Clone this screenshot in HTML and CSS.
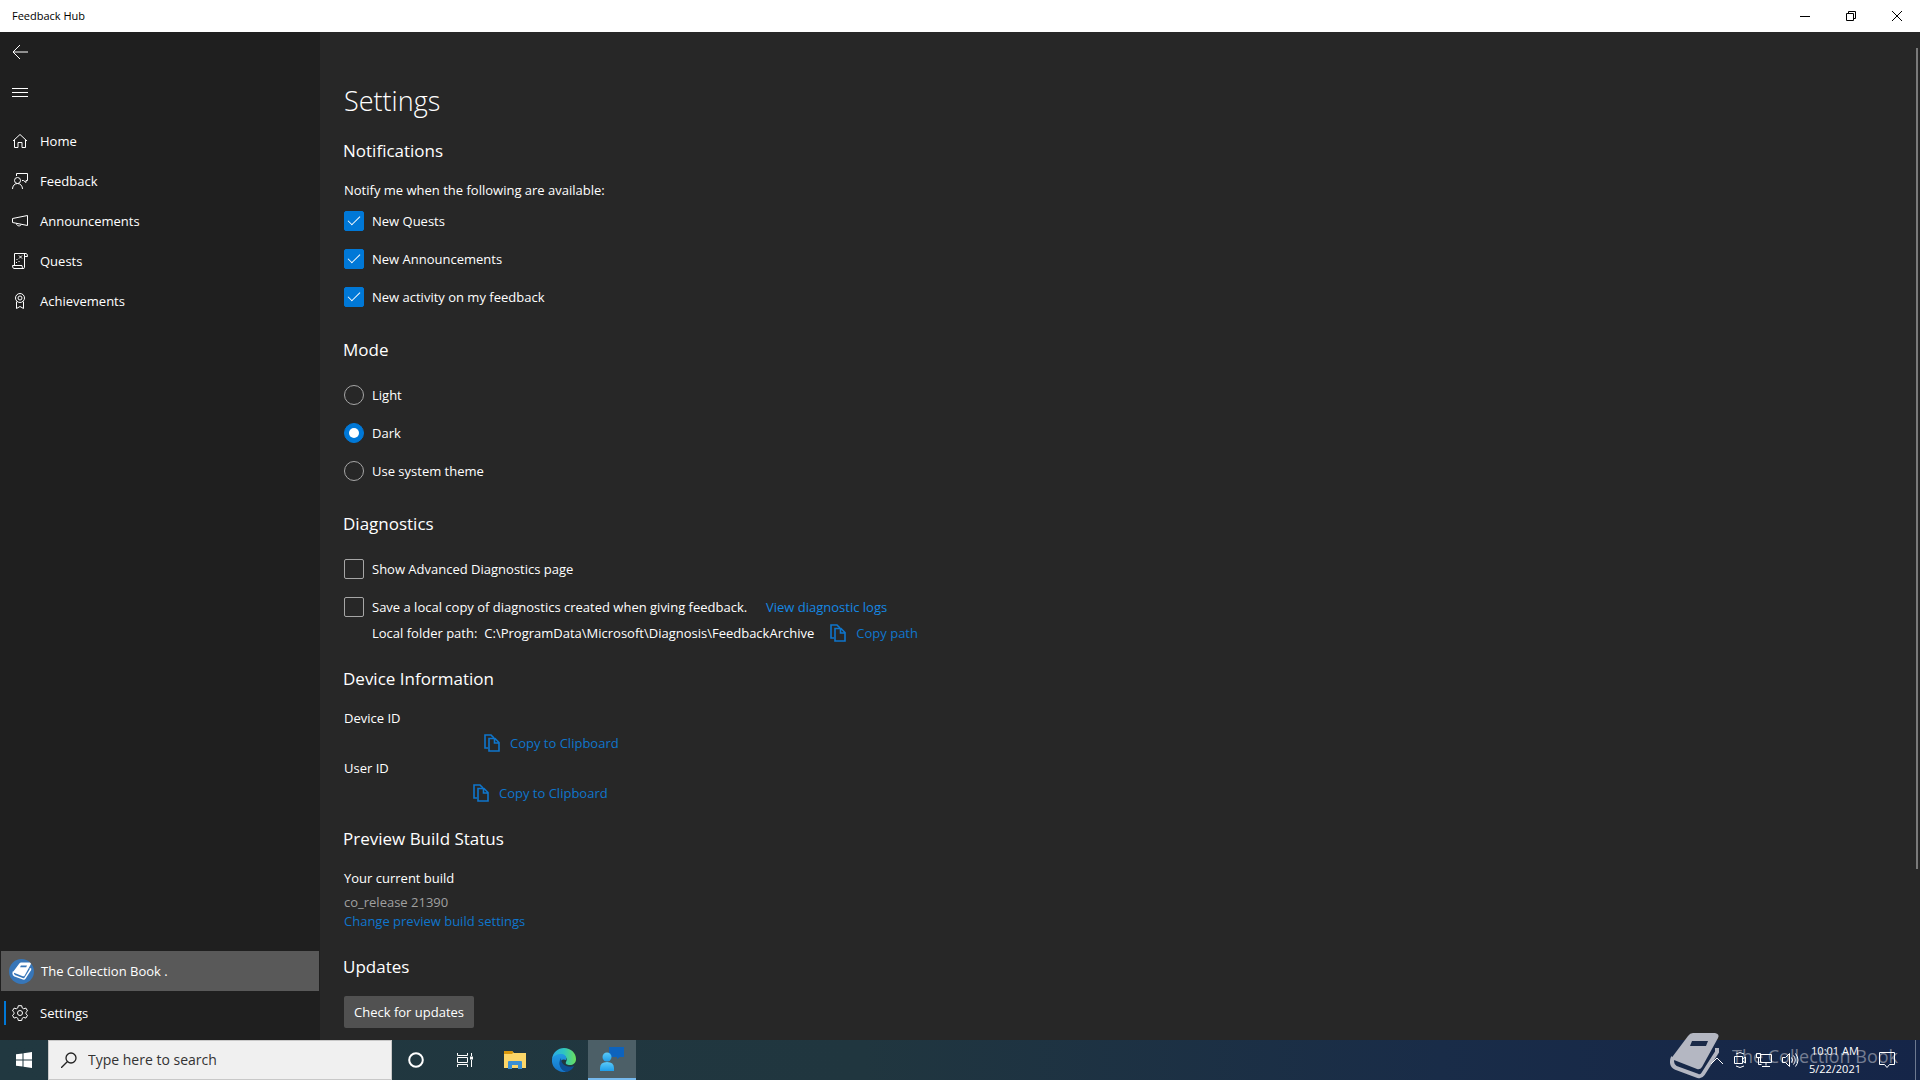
FILE: index.html
```html
<!DOCTYPE html>
<html lang="en">
<head>
    <meta charset="UTF-8">
    <meta name="viewport" content="width=device-width, initial-scale=1.0">
    <title>Feedback Hub</title>
    <link rel="stylesheet" href="styles.css">
</head>
<body>

<!-- shared icons -->
<svg class="defs" aria-hidden="true">
    <symbol id="icon-copy" viewBox="0 0 16 18">
        <path d="M4 14H1V1h6l3 3" fill="none" stroke="currentColor" stroke-width="1.6"/>
        <path d="M5 4.5h6l4 4V17H5zM10.5 4.5V9H15" fill="none" stroke="currentColor" stroke-width="1.6"/>
    </symbol>
    <symbol id="icon-book" viewBox="0 0 50 47">
        <path d="M23 1h22q5 1 3 5L32 35q-2 3-5 2L4 28q-3-1-1-4L18 4q2-3 5-3z" fill="currentColor"/>
        <path d="M3 25q-3 8 3 11l22 8q3 1 5-2l14-22v-4" fill="none" stroke="currentColor" stroke-width="4"/>
        <path class="book-slot" d="M22 9h16l-2 5H20z"/>
    </symbol>
</svg>

<header class="titlebar">
    <span>Feedback Hub</span>
    <div class="window-buttons">
        <button type="button" aria-label="Minimize"><svg width="10" height="10"><path d="M0 5.5h10"/></svg></button>
        <button type="button" aria-label="Restore"><svg width="10" height="10"><path d="M.5 2.5h7v7h-7zM2.5 2.5v-2h7v7h-2"/></svg></button>
        <button type="button" aria-label="Close"><svg width="10" height="10"><path d="M0 0l10 10M10 0L0 10"/></svg></button>
    </div>
</header>

<div class="app">
    <nav class="sidebar">
        <button type="button" class="nav-item" aria-label="Back">
            <svg viewBox="0 0 16 16"><path d="M16 8H1M8 1L1 8l7 7"/></svg>
        </button>
        <button type="button" class="nav-item menu" aria-label="Menu">
            <svg viewBox="0 0 16 16"><path d="M0 4.5h16M0 8.5h16M0 12.5h16"/></svg>
        </button>
        <a href="#" class="nav-item">
            <svg viewBox="0 0 16 16"><path d="M1 8l7-6.5L15 8M2.5 7v7.5H6v-5h4v5h3.5V7"/></svg>
            <span>Home</span>
        </a>
        <a href="#" class="nav-item">
            <svg viewBox="0 0 16 16"><path d="M4.5 3V.5h11v7H14v2L11.5 7.5H10"/><circle cx="5.5" cy="7.5" r="3"/><path d="M.5 16c0-3 2-5.500 5-5.500s5 2.500 5 5.500"/></svg>
            <span>Feedback</span>
        </a>
        <a href="#" class="nav-item">
            <svg viewBox="0 0 16 16"><path d="M.5 5.500l15-3v10l-15-3zM4.500 10.500c0 3 4.500 3 4.500 1"/></svg>
            <span>Announcements</span>
        </a>
        <a href="#" class="nav-item">
            <svg viewBox="0 0 16 16"><path d="M2.500 12V.5H14q1.500 0 1.500 3h-3M12.500 1v13.500q0 1-1.500 1H2q-1.500 0-1.500-3H10q0 3 1.500 3M7 2.500l3 3M10 2.500l-3 3"/><path d="M5 6v1M4.500 9v1M7 8v1"/></svg>
            <span>Quests</span>
        </a>
        <a href="#" class="nav-item">
            <svg viewBox="0 0 16 16"><circle cx="8" cy="5" r="4.500"/><circle cx="8" cy="5" r="2"/><path d="M4.500 8.500v7l3.500-2 3.500 2v-7"/></svg>
            <span>Achievements</span>
        </a>
        <button type="button" class="nav-item profile">
            <span class="avatar"><svg><use href="#icon-book"/></svg></span>
            <span>The Collection Book .</span>
        </button>
        <a href="#" class="nav-item current">
            <svg viewBox="0 0 16 16"><circle cx="8" cy="8" r="2.500"/><path d="M6.300.7h3.400l.5 2.200 1.500.9 2.200-.7 1.600 2.800-1.600 1.500v1.400l1.600 1.500-1.600 2.800-2.200-.7-1.500.9-.5 2.200H6.300l-.5-2.200-1.500-.9-2.200.7L.5 10.300l1.600-1.500V7.400L.5 5.900l1.600-2.800 2.200.7 1.500-.9z"/></svg>
            <span>Settings</span>
        </a>
    </nav>

    <main class="content">
        <h1>Settings</h1>

        <h2>Notifications</h2>
        <p>Notify me when the following are available:</p>
        <div class="options after-text">
            <label><input type="checkbox" checked>New Quests</label>
            <label><input type="checkbox" checked>New Announcements</label>
            <label><input type="checkbox" checked>New activity on my feedback</label>
        </div>

        <h2 class="after-options">Mode</h2>
        <div class="options">
            <label><input type="radio" name="mode">Light</label>
            <label><input type="radio" name="mode" checked>Dark</label>
            <label><input type="radio" name="mode">Use system theme</label>
        </div>

        <h2 class="after-options">Diagnostics</h2>
        <div class="options">
            <label><input type="checkbox">Show Advanced Diagnostics page</label>
            <div class="line">
                <label class="save-local"><input type="checkbox">Save a local copy of diagnostics created when giving feedback.</label>
                <a href="#" class="bright">View diagnostic logs</a>
            </div>
        </div>
        <div class="line folder">
            <span>Local folder path:</span>
            <span class="path">C:\ProgramData\Microsoft\Diagnosis\FeedbackArchive</span>
            <button type="button" class="copy"><svg><use href="#icon-copy"/></svg>Copy path</button>
        </div>

        <h2>Device Information</h2>
        <div class="stack">
            <p>Device ID</p>
            <div class="line">
                <span class="device-id"></span>
                <button type="button" class="copy"><svg><use href="#icon-copy"/></svg>Copy to Clipboard</button>
            </div>
            <p>User ID</p>
            <div class="line">
                <span class="user-id"></span>
                <button type="button" class="copy"><svg><use href="#icon-copy"/></svg>Copy to Clipboard</button>
            </div>
        </div>

        <h2>Preview Build Status</h2>
        <div class="stack">
            <p>Your current build</p>
            <p class="build">co_release 21390<br><a href="#">Change preview build settings</a></p>
        </div>

        <h2>Updates</h2>
        <button type="button" class="update">Check for updates</button>
        <div class="scroll-thumb"></div>
    </main>
</div>

<footer class="taskbar">
    <button type="button" class="task start" aria-label="Start">
        <svg width="16" height="16" fill="#fff"><path d="M0 2.300L6.500 1.400v6.100H0zM7.500 1.200L16 0v7.500H7.500zM0 8.500h6.500v6.100L0 13.700zM7.500 8.500H16V16l-8.500-1.200z"/></svg>
    </button>
    <label class="search">
        <svg width="16" height="16" fill="none" stroke="#222" stroke-width="1.3"><circle cx="10" cy="6" r="5"/><path d="M6.500 9.500L0 16"/></svg>
        <input type="text" placeholder="Type here to search" aria-label="Search">
    </label>
    <button type="button" class="task" aria-label="Cortana">
        <svg width="16" height="16" fill="none" stroke="#fff" stroke-width="2"><circle cx="8" cy="8" r="6.800"/></svg>
    </button>
    <button type="button" class="task app-slot" aria-label="Task View">
        <svg width="16" height="16" fill="none" stroke="#fff"><path d="M.5 1v2.500h10V1M.5 5.500h10v5H.5zM.5 15v-2.500h10V15M14.500 1v3M14.500 8v7"/><path d="M13 4.500h3v3h-3z" fill="#fff" stroke="none"/></svg>
    </button>
    <button type="button" class="task app-slot" aria-label="File Explorer">
        <svg width="22" height="18"><path d="M0 0h8l2 2h12v15H0z" fill="#fcd668"/><path d="M0 0h8l1.500 1.500L8 3H0z" fill="#d9980d"/><path d="M4 18v-7q0-1 1-1h12q1 0 1 1v7h-4v-4H8v4z" fill="#3a8fd3"/></svg>
    </button>
    <button type="button" class="task" aria-label="Microsoft Edge">
        <svg width="24" height="24" viewBox="0 0 24 24">
            <defs>
                <linearGradient id="edge-top"><stop offset="0" stop-color="#2aa9e8"/><stop offset=".5" stop-color="#2fc5c0"/><stop offset="1" stop-color="#6be05b"/></linearGradient>
                <linearGradient id="edge-side" x2="0" y2="1"><stop offset="0" stop-color="#219be3"/><stop offset="1" stop-color="#1473c8"/></linearGradient>
            </defs>
            <path d="M0 11C1 4 6 0 12 0c7 0 12 5 12 11 0 4-3 6-6 6-3 0-5-1-4-3 2-3 0-7-5-7-4 0-7 2-9 4z" fill="url(#edge-top)"/>
            <path d="M0 11c1-3 5-5 9-5 4 0 6 3 5 6-4-2-7 2-6 5 1 4 4 6 7 7C7 25-1 20 0 11z" fill="url(#edge-side)"/>
            <path d="M9 10c-4 6 0 13 6 14 3-1 6-3 7-6-5 2-13 0-13-8z" fill="#0d4f94"/>
        </svg>
    </button>
    <button type="button" class="task active" aria-label="Feedback Hub">
        <svg width="24" height="24" viewBox="0 0 24 24">
            <defs>
                <linearGradient id="person" x2="0" y2="1"><stop offset="0" stop-color="#5bcaf8"/><stop offset="1" stop-color="#1f9eea"/></linearGradient>
            </defs>
            <path d="M9 0h15v10h-4l-3 2v-2H9z" fill="#0d63bd"/>
            <circle cx="7" cy="10" r="4.500" fill="url(#person)"/><path d="M0 24v-3q0-6 7-6t7 6v3z" fill="url(#person)"/>
        </svg>
    </button>

    <div class="watermark">
        <svg><use href="#icon-book"/></svg>
        <span>The Collection Book</span>
    </div>
    <div class="tray">
        <button type="button" aria-label="Show hidden icons"><svg width="14" height="16"><path d="M1 12l6-6 6 6"/></svg></button>
        <button type="button" aria-label="Meet Now"><svg width="12" height="16"><path d="M.5 4.500h8v7h-8zM8.500 7l3-2v6l-3-2M2 2q4-3 8 0M2 14q4 3 8 0"/></svg></button>
        <button type="button" aria-label="Network"><svg width="16" height="16"><path d="M4.500 2.500h11v8h-11zM10 10.500v3M6 14.500h8M.5 1.500h4v4h-4zM2.500 5.500v7h3"/></svg></button>
        <button type="button" aria-label="Volume"><svg width="17" height="16"><path d="M.5 5.500h3l4-4v13l-4-4h-3zM9.500 5.500q2 2.500 0 5M11.500 3.500q3.500 4.500 0 9M13.500 1.500q5 6.500 0 13"/></svg></button>
        <time>10:01 AM<br>5/22/2021</time>
        <button type="button" aria-label="Action center"><svg width="16" height="16"><path d="M.5.5h15v12h-5L8 15.500 5.500 12.500h-5z"/></svg></button>
        <span class="show-desktop"></span>
    </div>
</footer>

</body>
</html>
```
FILE: styles.css
```css
* {
    box-sizing: border-box;
}
body {
    margin: 0;
    height: 100vh;
    display: flex;
    flex-direction: column;
    overflow: hidden;
    background-color: #272727;
    color: #fff;
    font-family: 'Segoe UI', 'Open Sans', 'Noto Sans', sans-serif;
    font-size: 13px;
    line-height: 20px;
}
button,
input {
    font: inherit;
    color: inherit;
    margin: 0;
}
button {
    border: none;
    background: none;
    padding: 0;
    cursor: pointer;
}
a {
    color: #0f76cc;
    text-decoration: none;
}
p {
    margin: 0;
}
svg {
    display: block;
    flex: none;
}
.defs {
    position: absolute;
    width: 0;
    height: 0;
}

/* Title bar */
.titlebar {
    flex: none;
    height: 32px;
    display: flex;
    align-items: center;
    justify-content: space-between;
    padding-left: 12px;
    background-color: #fff;
    color: #000;
    font-size: 11px;
}
.window-buttons {
    display: flex;
}
.window-buttons button {
    width: 46px;
    height: 32px;
    display: grid;
    place-items: center;
}
.window-buttons svg {
    fill: none;
    stroke: #000;
}

.app {
    flex: 1;
    min-height: 0;
    display: flex;
}

/* Sidebar */
.sidebar {
    flex: none;
    width: 320px;
    display: flex;
    flex-direction: column;
    padding-bottom: 7px;
    background-color: #1f1f1f;
}
.nav-item {
    flex: none;
    height: 40px;
    display: flex;
    align-items: center;
    gap: 12px;
    padding: 0 12px;
    color: #fff;
}
.nav-item > svg {
    width: 16px;
    height: 16px;
    fill: none;
    stroke: #fff;
}
.menu {
    margin-bottom: 9px;
}
.profile {
    margin: auto 1px 2px;
    padding: 0 8px;
    gap: 7px;
    background-color: #595959;
}
.avatar {
    width: 25px;
    height: 25px;
    display: grid;
    place-items: center;
    border-radius: 50%;
    background-color: #3776b8;
}
.avatar svg {
    --slot: #3776b8;
    width: 20px;
    height: 18px;
}
.book-slot {
    fill: var(--slot);
}
.current {
    padding-left: 4px;
}
.current::before {
    content: "";
    width: 2px;
    height: 24px;
    margin-right: -6px;
    background-color: #0078d7;
}

/* Settings page */
.content {
    flex: 1;
    position: relative;
    padding: 49px 24px 0;
    overflow: hidden;
}
h1 {
    margin: 0;
    font-size: 27px;
    font-weight: 300;
    line-height: 40px;
}
h2 {
    margin: 24px 0 17px -1px;
    font-size: 17px;
    font-weight: 400;
    line-height: 24px;
}
h1 + h2 {
    margin-top: 18px;
}
.options {
    display: flex;
    flex-direction: column;
    align-items: flex-start;
    gap: 18px;
    padding-top: 6px;
}
.after-text {
    padding-top: 11px;
}
.after-options {
    margin-top: 31px;
}
label {
    display: flex;
    align-items: center;
    gap: 8px;
}
input[type="checkbox"],
input[type="radio"] {
    appearance: none;
    flex: none;
    width: 20px;
    height: 20px;
    display: grid;
    place-items: center;
    border: 1px solid #a6a6a6;
    border-radius: 2px;
}
input[type="radio"] {
    border-radius: 50%;
}
input:checked {
    border-color: #0078d7;
    background-color: #0078d7;
}
input[type="checkbox"]:checked::after {
    content: "";
    width: 5px;
    height: 11px;
    margin-bottom: 4px;
    border: solid #fff;
    border-width: 0 1px 1px 0;
    transform: rotate(45deg);
}
input[type="radio"]:checked::after {
    content: "";
    width: 10px;
    height: 10px;
    border-radius: 50%;
    background-color: #fff;
}
.line {
    display: flex;
    align-items: center;
    gap: 7px;
}
.save-local {
    min-width: 415px;
}
.bright {
    color: #1588e3;
}
.folder {
    padding: 6px 0 0 28px;
}
.path {
    min-width: 339px;
}
.copy {
    display: flex;
    align-items: center;
    gap: 10px;
    color: #0f76cc;
}
.copy svg {
    width: 16px;
    height: 18px;
}
.stack {
    display: flex;
    flex-direction: column;
    gap: 5px;
}
/* width reserved for the hidden identifiers */
.device-id {
    width: 133px;
}
.user-id {
    width: 122px;
}
.build {
    color: #a0a0a0;
    line-height: 19px;
}
.update {
    height: 32px;
    padding: 0 10px;
    border-radius: 2px;
    background-color: #515151;
}
.scroll-thumb {
    position: absolute;
    top: 16px;
    right: 2px;
    bottom: 171px;
    width: 2px;
    background-color: #7a7a7a;
}

/* Taskbar */
.taskbar {
    flex: none;
    position: relative;
    height: 40px;
    display: flex;
    background: linear-gradient(90deg, #213840 0%, #20363f 45%, #192c48 75%, #152548 100%);
}
.task {
    width: 48px;
    display: grid;
    place-items: center;
}
.search {
    width: 344px;
    gap: 0;
    padding: 0 12px;
    border: 1px solid #c8c8c8;
    background-color: #f0f0f0;
    color: #222;
}
.search input {
    flex: 1;
    min-width: 0;
    padding: 0 11px;
    border: none;
    outline: none;
    background: none;
    font-size: 14px;
}
.search input::placeholder {
    color: #333;
    opacity: 1;
}
.app-slot {
    width: 50px;
}
.active {
    background-color: #4c5f67;
    border-bottom: 2px solid #76b9ed;
}
.tray {
    position: relative;
    margin-left: auto;
    display: flex;
    align-items: center;
    gap: 10px;
}
.tray svg {
    fill: none;
    stroke: #fff;
}
.tray time {
    margin-right: 8px;
    font-size: 11px;
    line-height: 18px;
    text-align: center;
}
.show-desktop {
    width: 5px;
    height: 40px;
    margin-left: 10px;
    border-left: 1px solid #6d7990;
}
.watermark {
    position: absolute;
    right: 22px;
    bottom: 1px;
    display: flex;
    align-items: center;
    gap: 12px;
    color: #b4b7c2;
    font-size: 18px;
    pointer-events: none;
}
.watermark svg {
    --slot: #1a2a48;
    width: 50px;
    height: 47px;
}
.watermark span {
    opacity: 0.6;
}
```
